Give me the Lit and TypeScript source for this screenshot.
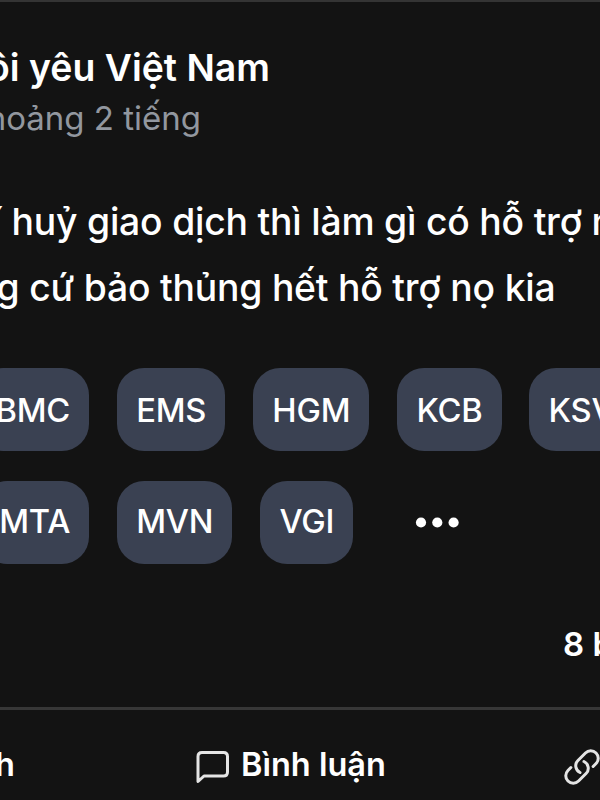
import { LitElement, html, css } from "lit";
import { customElement } from "lit/decorators.js";

@customElement("app-root")
class AppRoot extends LitElement {
  static styles = css`
    :host {
      display: block;
      width: 600px;
      height: 800px;
      overflow: hidden;
      background: #131313;
      color: #fff;
      font-family: Inter, "Noto Sans", sans-serif;
      white-space: nowrap;
    }
    .post {
      box-sizing: border-box;
      height: 710px;
      border-top: 2px solid #343434;
      border-bottom: 3px solid #373737;
      padding-top: 39px;
      display: flex;
      flex-direction: column;
    }
    .line { display: flex; justify-content: flex-end; flex: none; }
    .title { width: 270px; height: 53px; line-height: 54px; font-size: 37.4px; font-weight: 600; }
    .time { width: 201px; height: 48px; line-height: 48px; font-size: 33px; color: #92979f; }
    .body { height: 66px; line-height: 66px; font-size: 37.3px; font-weight: 450; letter-spacing: -0.2px; }
    .first { margin-top: 47px; width: 655.5px; }
    .second { width: 555.5px; }
    .tags { display: flex; gap: 27.9px; flex: none; height: 83px; }
    .row1 { margin-top: 47.4px; margin-left: -23.8px; }
    .row2 { margin-top: 30px; margin-left: -20px; }
    .tag {
      flex: none;
      box-sizing: border-box;
      padding: 0 19px 0 19.2px;
      height: 83px;
      line-height: 84px;
      border-radius: 27px;
      background: #3a4152;
      font-size: 32.7px;
      font-weight: 450;
      letter-spacing: -0.2px;
    }
    .row2 .tag { line-height: 80px; }
    .more { margin-left: 30px; width: 52px; height: 83px; fill: #fff; }
    .count { margin: 57px 0 0 563px; height: 48px; line-height: 47px; font-size: 33px; font-weight: 600; }
    .actions { display: flex; height: 90px; font-size: 32.500px; font-weight: 600; line-height: 109px; }
    .like { width: 15px; flex: none; }
    .comment { margin-left: 179px; width: 371px; display: flex; flex: none; gap: 10px; }
    .icon { flex: none; fill: none; stroke: #e4e4e4; stroke-linecap: round; stroke-linejoin: round; }
    .bubble { width: 38px; height: 38px; margin-top: 38px; margin-right: -1px; }
    .link { width: 40px; height: 40px; margin-top: 37px; margin-left: -3px; }
  `;

  render() {
    const tag = (t: string) => html`<span class="tag">${t}</span>`;
    return html`
      <article class="post">
        <div class="line title">Tôi yêu Việt Nam</div>
        <div class="line time">khoảng 2 tiếng</div>
        <div class="line body first">phí huỷ giao dịch thì làm gì có hỗ trợ này</div>
        <div class="line body second">nhưng cứ bảo thủng hết hỗ trợ nọ kia</div>
        <div class="tags row1">${["BMC", "EMS", "HGM", "KCB", "KSV"].map(tag)}</div>
        <div class="tags row2">
          ${["MTA", "MVN", "VGI"].map(tag)}
          <svg class="more" viewBox="0 0 52 83">
            <circle cx="10" cy="41.5" r="5.1" /><circle cx="26.3" cy="41.5" r="5.1" /><circle cx="42.6" cy="41.5" r="5.1" />
          </svg>
        </div>
        <div class="count">8 bình luận</div>
      </article>
      <footer class="actions">
        <div class="line like">Thích</div>
        <div class="comment">
          <svg class="icon bubble" viewBox="0 0 38 38" stroke-width="3">
            <path d="M4 33.5V8.5Q4 4.500 8 4.500H29.500Q33.500 4.500 33.500 8.500V24Q33.500 28 29.500 28H10Z" />
          </svg>
          <span>Bình luận</span>
        </div>
        <svg class="icon link" viewBox="0 0 24 24" stroke-width="1.8">
          <path d="M13.19 8.688a4.500 4.500 0 0 1 1.242 7.244l-4.500 4.500a4.500 4.500 0 0 1-6.364-6.364l1.757-1.757m13.350-.622 1.757-1.757a4.500 4.500 0 0 0-6.364-6.364l-4.500 4.500a4.500 4.500 0 0 0 1.242 7.244" />
        </svg>
      </footer>
    `;
  }
}
